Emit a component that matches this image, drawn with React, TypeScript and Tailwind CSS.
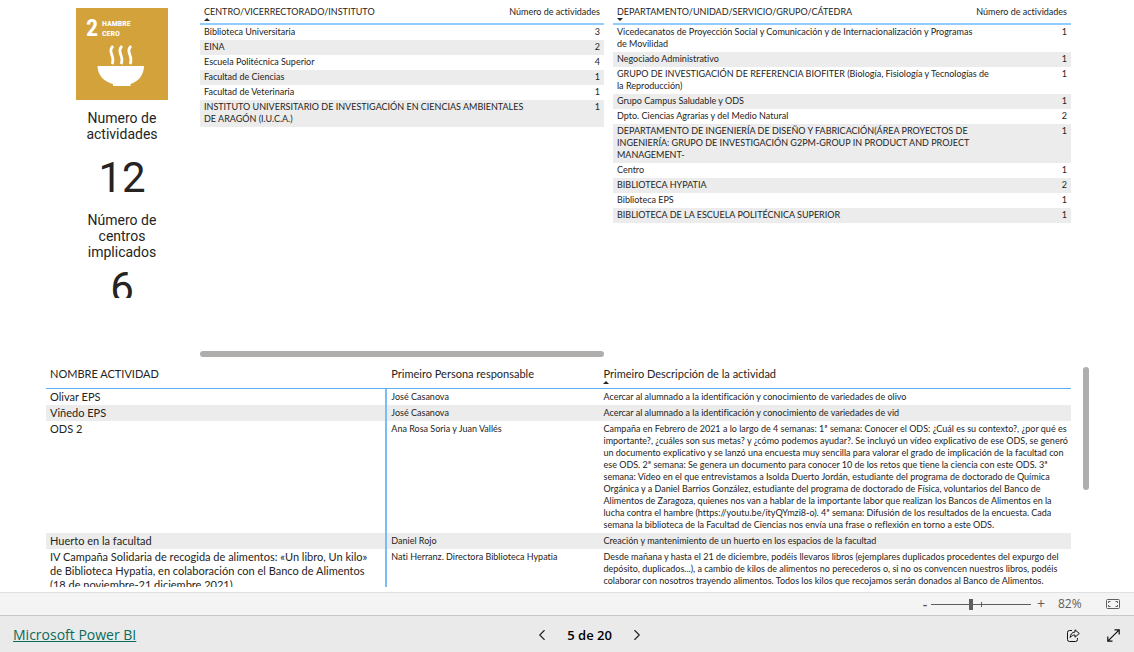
import React, { useState } from "react";
import { ChevronLeft, ChevronRight } from "lucide-react";

const centros = [
  { name: "Biblioteca Universitaria", total: 3 },
  { name: "EINA", total: 2 },
  { name: "Escuela Politécnica Superior", total: 4 },
  { name: "Facultad de Ciencias", total: 1 },
  { name: "Facultad de Veterinaria", total: 1 },
  {
    name: "INSTITUTO UNIVERSITARIO DE INVESTIGACIÓN EN CIENCIAS AMBIENTALES\nDE ARAGÓN (I.U.C.A.)",
    total: 1,
  },
];

const departamentos = [
  {
    name: "Vicedecanatos de Proyección Social y Comunicación y de Internacionalización y Programas\nde Movilidad",
    total: 1,
  },
  { name: "Negociado Administrativo", total: 1 },
  {
    name: "GRUPO DE INVESTIGACIÓN DE REFERENCIA BIOFITER (Biología, Fisiología y Tecnologías de\nla Reproducción)",
    total: 1,
  },
  { name: "Grupo Campus Saludable y ODS", total: 1 },
  { name: "Dpto. Ciencias Agrarias y del Medio Natural", total: 2 },
  {
    name: "DEPARTAMENTO DE INGENIERÍA DE DISEÑO Y FABRICACIÓN(ÁREA PROYECTOS DE\nINGENIERÍA: GRUPO DE INVESTIGACIÓN G2PM-GROUP IN PRODUCT AND PROJECT\nMANAGEMENT-",
    total: 1,
  },
  { name: "Centro", total: 1 },
  { name: "BIBLIOTECA HYPATIA", total: 2 },
  { name: "Biblioteca EPS", total: 1 },
  { name: "BIBLIOTECA DE LA ESCUELA POLITÉCNICA SUPERIOR", total: 1 },
];

const actividades = [
  {
    name: "Olivar EPS",
    person: "José Casanova",
    description: "Acercar al alumnado a la identificación y conocimiento de variedades de olivo",
  },
  {
    name: "Viñedo EPS",
    person: "José Casanova",
    description: "Acercar al alumnado a la identificación y conocimiento de variedades de vid",
  },
  {
    name: "ODS 2",
    person: "Ana Rosa Soria y Juan Vallés",
    description:
      "Campaña en Febrero de 2021 a lo largo de 4 semanas: 1ª semana: Conocer el ODS: ¿Cuál es su contexto?, ¿por qué es\nimportante?, ¿cuáles son sus metas? y ¿cómo podemos ayudar?. Se incluyó un vídeo explicativo de ese ODS, se generó\nun documento explicativo y se lanzó una encuesta muy sencilla para valorar el grado de implicación de la facultad con\nese ODS. 2ª semana: Se genera un documento para conocer 10 de los retos que tiene la ciencia con este ODS. 3ª\nsemana: Vídeo en el que entrevistamos a Isolda Duerto Jordán, estudiante del programa de doctorado de Química\nOrgánica y a Daniel Barrios González, estudiante del programa de doctorado de Física, voluntarios del Banco de\nAlimentos de Zaragoza, quienes nos van a hablar de la importante labor que realizan los Bancos de Alimentos en la\nlucha contra el hambre (https://youtu.be/ityQYmzi8-o). 4ª semana: Difusión de los resultados de la encuesta. Cada\nsemana la biblioteca de la Facultad de Ciencias nos envía una frase o reflexión en torno a este ODS.",
  },
  {
    name: "Huerto en la facultad",
    person: "Daniel Rojo",
    description: "Creación y mantenimiento de un huerto en los espacios de la facultad",
  },
  {
    name: "IV Campaña Solidaria de recogida de alimentos: «Un libro, Un kilo»\nde Biblioteca Hypatia, en colaboración con el Banco de Alimentos\n(18 de noviembre-21 diciembre 2021)",
    person: "Nati Herranz. Directora Biblioteca Hypatia",
    description:
      "Desde mañana y hasta el 21 de diciembre, podéis llevaros libros (ejemplares duplicados procedentes del expurgo del\ndepósito, duplicados...), a cambio de kilos de alimentos no perecederos o, si no os convencen nuestros libros, podéis\ncolaborar con nosotros trayendo alimentos. Todos los kilos que recojamos serán donados al Banco de Alimentos.",
  },
];

function SortArrow({ down = false }: { down?: boolean }) {
  return (
    <svg viewBox="0 0 6 3" className="block h-[3px] w-[6px]" aria-hidden="true">
      <path d={down ? "M0 0h6L3 3z" : "M0 3h6L3 0z"} fill="#252423" />
    </svg>
  );
}

type CountTableProps = {
  title: string;
  down?: boolean;
  rows: { name: string; total: number }[];
};

function CountTable({ title, down, rows }: CountTableProps) {
  return (
    <table className="w-full table-fixed border-collapse text-[9px] leading-[12px]">
      <thead>
        <tr className="h-6 border-b-2 border-[#92cbff] align-top">
          <th className="px-1 pt-[6px] text-left font-normal whitespace-nowrap">
            {title}
            <SortArrow down={down} />
          </th>
          <th className="w-[100px] px-1 pt-[6px] text-right font-normal whitespace-nowrap">
            Número de actividades
          </th>
        </tr>
      </thead>
      <tbody>
        {rows.map((row) => (
          <tr key={row.name} className="align-top even:bg-[#ececec]">
            <td className="px-1 pt-px pb-[2px] whitespace-pre">{row.name}</td>
            <td className="px-1 pt-px pb-[2px] text-right">{row.total}</td>
          </tr>
        ))}
      </tbody>
    </table>
  );
}

function HambreCero() {
  return (
    <svg viewBox="0 0 92 92" className="h-[92px] w-[92px]" role="img" aria-label="ODS 2 Hambre cero">
      <rect width="92" height="92" fill="#d3a23b" />
      <g fill="#fff" fontFamily="'Roboto Condensed', Roboto, sans-serif" fontWeight="700">
        <text x="10" y="28" fontSize="24">2</text>
        <text x="26" y="18" fontSize="8">HAMBRE</text>
        <text x="26" y="28" fontSize="8">CERO</text>
      </g>
      <path d="M21.500 58H68C68 67 62 74 54.500 76V78H37V76C28 74 21.500 67 21.500 58z" fill="#fff" />
      <g fill="none" stroke="#fff" strokeWidth="2.800">
        <path d="M37 38c-6 6 3 11-1 18" />
        <path d="M46 38c-6 6 3 11-1 18" />
        <path d="M55 38c-6 6 3 11-1 18" />
      </g>
    </svg>
  );
}

export default function App() {
  const [zoom, setZoom] = useState(40);

  return (
    <div className="flex h-screen flex-col overflow-hidden bg-white font-['Open_Sans','Noto_Sans',sans-serif] text-[#252423]">
      <main className="flex min-h-0 flex-1 flex-col pb-[5px] pl-[46px] font-[Lato,sans-serif] [font-variant-ligatures:none]">
        {/* Resumen */}
        <section className="flex h-[360px] shrink-0 pr-[63px]">
          <div className="mr-[2px] flex w-[152px] shrink-0 flex-col items-center pt-2 text-center font-[Roboto,sans-serif]">
            <HambreCero />
            <h2 className="mt-[10px] text-[14px] leading-[16px]">
              Numero de
              <br />
              actividades
            </h2>
            <p className="mt-3 text-[42px] leading-[48px]">12</p>
            <h2 className="mt-[10px] text-[14px] leading-[16px]">
              Número de
              <br />
              centros
              <br />
              implicados
            </h2>
            <p className="mt-1 h-[34px] overflow-hidden text-[42px] leading-[48px]">6</p>
          </div>
          <div className="grid flex-1 grid-cols-[minmax(0,404fr)_minmax(0,458fr)] gap-x-[9px]">
            <div className="flex flex-col justify-between pb-[3px]">
              <CountTable title="CENTRO/VICERRECTORADO/INSTITUTO" rows={centros} />
              <div className="h-[6px] rounded-full bg-[#b0aead]" />
            </div>
            <div>
              <CountTable title="DEPARTAMENTO/UNIDAD/SERVICIO/GRUPO/CÁTEDRA" down rows={departamentos} />
            </div>
          </div>
        </section>

        {/* Detalle de actividades */}
        <section className="flex min-h-0 flex-1 gap-3 overflow-hidden pr-[45px]">
          <div className="min-w-0 flex-1">
            <table className="w-full table-fixed border-separate border-spacing-0 text-[9px] leading-[12px]">
              <thead>
                <tr className="h-[29px] align-top text-[11px] leading-[14px]">
                  <th className="w-[33.3%] border-b border-[#5aaef5] px-1 pt-[7px] text-left font-normal">
                    NOMBRE ACTIVIDAD
                  </th>
                  <th className="w-[20.7%] border-b border-[#5aaef5] px-1 pt-[7px] text-left font-normal">
                    Primeiro Persona responsable
                  </th>
                  <th className="border-b border-[#5aaef5] px-1 pt-[7px] text-left font-normal">
                    Primeiro Descripción de la actividad
                    <SortArrow />
                  </th>
                </tr>
              </thead>
              <tbody>
                {actividades.map((item) => (
                  <tr key={item.name} className="align-top even:bg-[#ececec]">
                    <td className="border-r-2 border-[#79bdf8] px-1 pt-px pb-px text-[11px] leading-[14px] whitespace-pre">
                      {item.name}
                    </td>
                    <td className="px-1 pt-[2px] pb-[2px] whitespace-pre">{item.person}</td>
                    <td className="px-1 pt-[2px] pb-[2px] whitespace-pre">{item.description}</td>
                  </tr>
                ))}
              </tbody>
            </table>
          </div>
          <div className="mt-[7px] h-[123px] w-[6px] shrink-0 rounded-full bg-[#b0aead]" />
        </section>
      </main>

      {/* Zoom */}
      <div className="flex h-[23px] shrink-0 items-center justify-end border-t border-[#e0e0e0] bg-[#f4f4f4] pr-[14px] text-[#605e5c]">
        <button aria-label="Alejar" className="w-[12px] text-[14px] leading-[16px] font-semibold">-</button>
        <div className="relative flex w-[100px] items-center">
          <input
            type="range"
            aria-label="Zoom"
            value={zoom}
            onChange={(e) => setZoom(Number(e.target.value))}
            className="h-[11px] w-full appearance-none bg-transparent [&::-webkit-slider-runnable-track]:h-px [&::-webkit-slider-runnable-track]:bg-[#605e5c] [&::-webkit-slider-thumb]:-mt-[5px] [&::-webkit-slider-thumb]:h-[11px] [&::-webkit-slider-thumb]:w-1 [&::-webkit-slider-thumb]:appearance-none [&::-webkit-slider-thumb]:bg-[#605e5c]"
          />
          <span className="pointer-events-none absolute top-[3px] left-1/2 h-[5px] w-px bg-[#605e5c]" />
        </div>
        <button aria-label="Acercar" className="w-5 text-[14px] leading-[16px]">+</button>
        <span className="ml-[7px] w-6 text-[12px] leading-[16px]">82%</span>
        <button aria-label="Ajustar a la página" className="ml-6">
          <svg viewBox="0 0 14 10" className="h-[10px] w-[14px]" fill="none" stroke="#605e5c">
            <rect x=".5" y=".5" width="13" height="9" rx="1" />
            <path d="M4.500 2.500h-2v1.500M4.500 7.500h-2V6M9.500 2.500h2v1.500M9.500 7.500h2V6" />
          </svg>
        </button>
      </div>

      {/* Barra de navegación */}
      <footer className="flex h-[37px] shrink-0 items-center justify-between border-t border-[#c8c8c8] bg-[#eaeaea] pt-[2px] pr-[14px] pl-[13px]">
        <a href="#" className="text-[14px] leading-[20px] text-[#0b6a5b] underline">
          Microsoft Power BI
        </a>
        <nav className="flex items-center gap-4">
          <button aria-label="Página anterior">
            <ChevronLeft size={18} strokeWidth={1.5} />
          </button>
          <span className="text-[13px] leading-[20px] font-semibold text-black">5 de 20</span>
          <button aria-label="Página siguiente">
            <ChevronRight size={18} strokeWidth={1.5} />
          </button>
        </nav>
        <div className="flex items-center gap-[27px] pl-6">
          <button aria-label="Compartir">
            <svg viewBox="0 0 13 13" className="h-[13px] w-[13px]" fill="none" stroke="#111" strokeLinejoin="round">
              <path d="M5 1.500H2.500a2 2 0 0 0-2 2v7a2 2 0 0 0 2 2h6a2 2 0 0 0 2-2V9" />
              <path d="M8 .8 12.300 4.500 8 8.200V6C6 6 4.500 6.700 3.200 8.500 3.400 5.300 5 3.200 8 3z" />
            </svg>
          </button>
          <button aria-label="Pantalla completa">
            <svg viewBox="0 0 13 13" className="h-[13px] w-[13px]" fill="none" stroke="#111" strokeWidth="1.200">
              <path d="M.8 12.200 12.200.8M7.500.8h4.700v4.700M.8 7.500v4.700h4.700" />
            </svg>
          </button>
        </div>
      </footer>
    </div>
  );
}
